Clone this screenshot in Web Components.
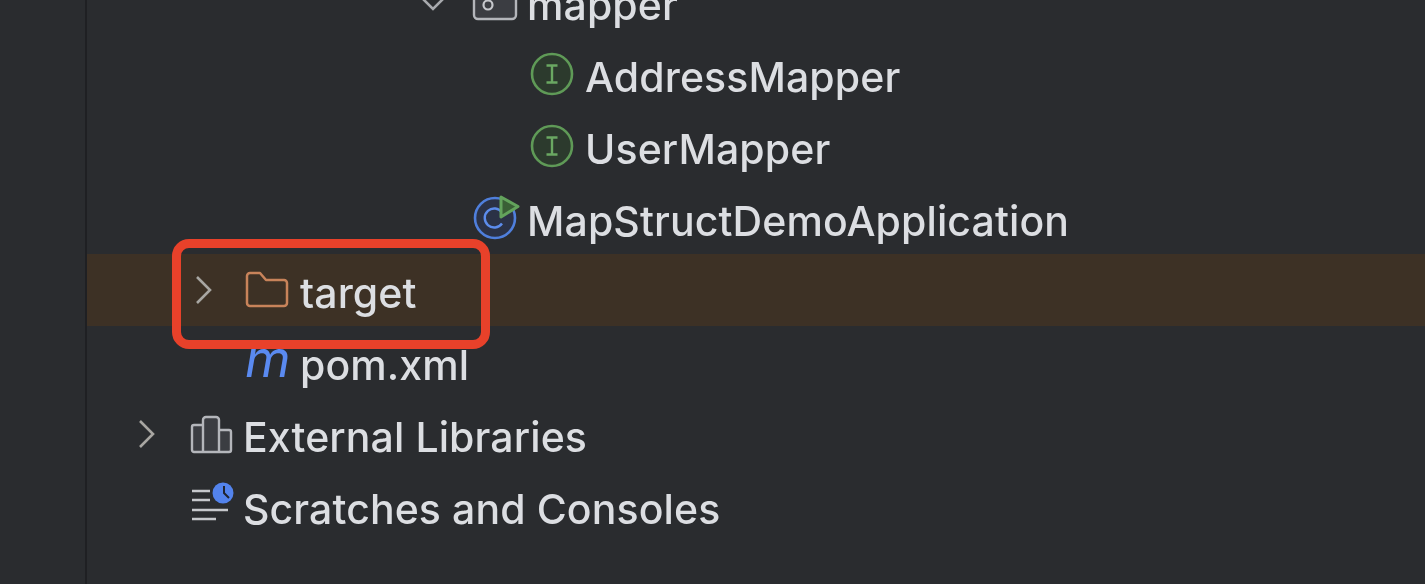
<!DOCTYPE html>
<html>
<head>
<meta charset="utf-8">
<title>Project tree</title>
<style>
    html, body { margin: 0; height: 100%; background: #2a2c2f; }
</style>
</head>
<body>
<project-panel>
    <tree-row indent="328" open label="mapper">
        <svg slot="icon" width="44" height="44" viewBox="0 0 44 44" fill="none">
            <path d="M2 -4h42v39a4 4 0 0 1-4 4H6a4 4 0 0 1-4-4z" fill="#3b3d42" stroke="#b4b6bb" stroke-width="2.4"/>
            <circle cx="16" cy="25" r="4.500" stroke="#c6c8cc" stroke-width="2.2"/>
        </svg>
    </tree-row>
    <tree-row indent="386" label="AddressMapper">
        <svg slot="icon" width="44" height="44" viewBox="0 0 44 44" fill="none">
            <circle cx="22" cy="22" r="20" fill="#2c3a2d" stroke="#5f9a57" stroke-width="2.6"/>
            <path d="M16.500 13.500h11M22 13.500v17M16.500 30.500h11" stroke="#6aa862" stroke-width="2.4"/>
        </svg>
    </tree-row>
    <tree-row indent="386" label="UserMapper">
        <svg slot="icon" width="44" height="44" viewBox="0 0 44 44" fill="none">
            <circle cx="22" cy="22" r="20" fill="#2c3a2d" stroke="#5f9a57" stroke-width="2.6"/>
            <path d="M16.500 13.500h11M22 13.500v17M16.500 30.500h11" stroke="#6aa862" stroke-width="2.4"/>
        </svg>
    </tree-row>
    <tree-row indent="328" label="MapStructDemoApplication">
        <svg slot="icon" width="48" height="48" viewBox="0 0 48 48" fill="none">
            <circle cx="23" cy="24" r="20" fill="#2b3246" stroke="#4f7fdc" stroke-width="2.6"/>
            <path d="M30 18.500a9.500 9.500 0 1 0 0 11" stroke="#5c8cec" stroke-width="2.4"/>
            <path d="M29 3l17 9.500-17 10.500z" fill="#3a5f36" stroke="#63a35c" stroke-width="3" stroke-linejoin="round"/>
        </svg>
    </tree-row>
    <tree-row indent="101" closed selected label="target">
        <svg slot="icon" width="44" height="44" viewBox="0 0 44 44" fill="none">
            <path d="M2 8a3 3 0 0 1 3-3h10l6 7h18a3 3 0 0 1 3 3v20a3 3 0 0 1-3 3H5a3 3 0 0 1-3-3z" stroke="#c8835a" stroke-width="2.500" stroke-linejoin="round"/>
        </svg>
    </tree-row>
    <tree-row indent="101" label="pom.xml">
        <span slot="icon" class="maven">m</span>
    </tree-row>
    <tree-row indent="44" closed label="External Libraries">
        <svg slot="icon" width="44" height="44" viewBox="0 0 44 44" fill="none">
            <path d="M6 13h9v27H6a2 2 0 0 1-2-2V15a2 2 0 0 1 2-2zM15 8a3 3 0 0 1 3-3h10a3 3 0 0 1 3 3v32H15zM31 18h10a2 2 0 0 1 2 2v18a2 2 0 0 1-2 2H31z" fill="#3b3d42" stroke="#b4b6bb" stroke-width="2.4" stroke-linejoin="round"/>
        </svg>
    </tree-row>
    <tree-row indent="44" label="Scratches and Consoles">
        <svg slot="icon" width="44" height="44" viewBox="0 0 44 44" fill="none">
            <path d="M4 7h18M4 16h18M4 26h36M4 35h24" stroke="#c6c8cc" stroke-width="2.400"/>
            <circle cx="35" cy="9" r="10.500" fill="#5383ec"/>
            <path d="M36 2v7l5 5" stroke="#20242e" stroke-width="2"/>
        </svg>
    </tree-row>
</project-panel>

<script>
(function () {
    const rowTemplate = document.createElement('template');
    rowTemplate.innerHTML = `
    <style>
        :host {
            display: flex;
            align-items: center;
            height: 72px;
            box-sizing: border-box;
            padding-left: var(--indent, 0);
            color: #dcdee2;
            font: 500 41px/72px Inter, "Noto Sans", sans-serif;
            letter-spacing: 0.1px;
            white-space: nowrap;
        }
        :host([selected]) { background: #3d3125; }
        #arrow { flex: none; width: 57px; height: 44px; overflow: visible; }
        #icon {
            flex: none;
            width: 55px;
            height: 44px;
            display: flex;
            align-items: center;
        }
        ::slotted(svg) { overflow: visible; display: block; }
        ::slotted(.maven) {
            color: #5a8af0;
            font: italic 400 52px/40px Inter, sans-serif;
            margin-bottom: 6px;
        }
        #label { position: relative; top: 3px; }
    </style>
    <svg id="arrow" viewBox="0 0 57 44" fill="none"></svg>
    <span id="icon"><slot name="icon"></slot></span>
    <span id="label"></span>`;

    class TreeRow extends HTMLElement {
        constructor () {
            super();
            this.attachShadow({mode: 'open'});
            this.shadowRoot.appendChild(rowTemplate.content.cloneNode(true));
        }
        connectedCallback () {
            this.style.setProperty('--indent', this.getAttribute('indent') + 'px');
            this.shadowRoot.getElementById('label').textContent = this.getAttribute('label');
            var arrow = this.shadowRoot.getElementById('arrow');
            if (this.hasAttribute('closed')) {
                arrow.innerHTML = '<path d="M9 9l13 13-13 13" stroke="#a8a6a2" stroke-width="2.600"/>';
            } else if (this.hasAttribute('open')) {
                arrow.innerHTML = '<path d="M7 18l11 11 11-11" stroke="#a8aaae" stroke-width="2.600"/>';
            }
        }
    }
    customElements.define('tree-row', TreeRow);

    const panelTemplate = document.createElement('template');
    panelTemplate.innerHTML = `
    <style>
        :host {
            display: flex;
            height: 584px;
            overflow: hidden;
            position: relative;
            background: #2a2c2f;
            filter: blur(0.7px);
        }
        #gutter {
            flex: none;
            width: 85px;
            border-right: 2px solid #1f2023;
        }
        #tree {
            flex: 1;
            margin-top: -34px;
        }
        #mark {
            position: absolute;
            left: 172px;
            top: 239px;
            width: 318px;
            height: 110px;
            box-sizing: border-box;
            border: 9px solid #e8412a;
            border-radius: 17px;
        }
    </style>
    <div id="gutter"></div>
    <div id="tree"><slot></slot></div>
    <div id="mark"></div>`;

    class ProjectPanel extends HTMLElement {
        constructor () {
            super();
            this.attachShadow({mode: 'open'});
            this.shadowRoot.appendChild(panelTemplate.content.cloneNode(true));
        }
    }
    customElements.define('project-panel', ProjectPanel);
})();
</script>
</body>
</html>
